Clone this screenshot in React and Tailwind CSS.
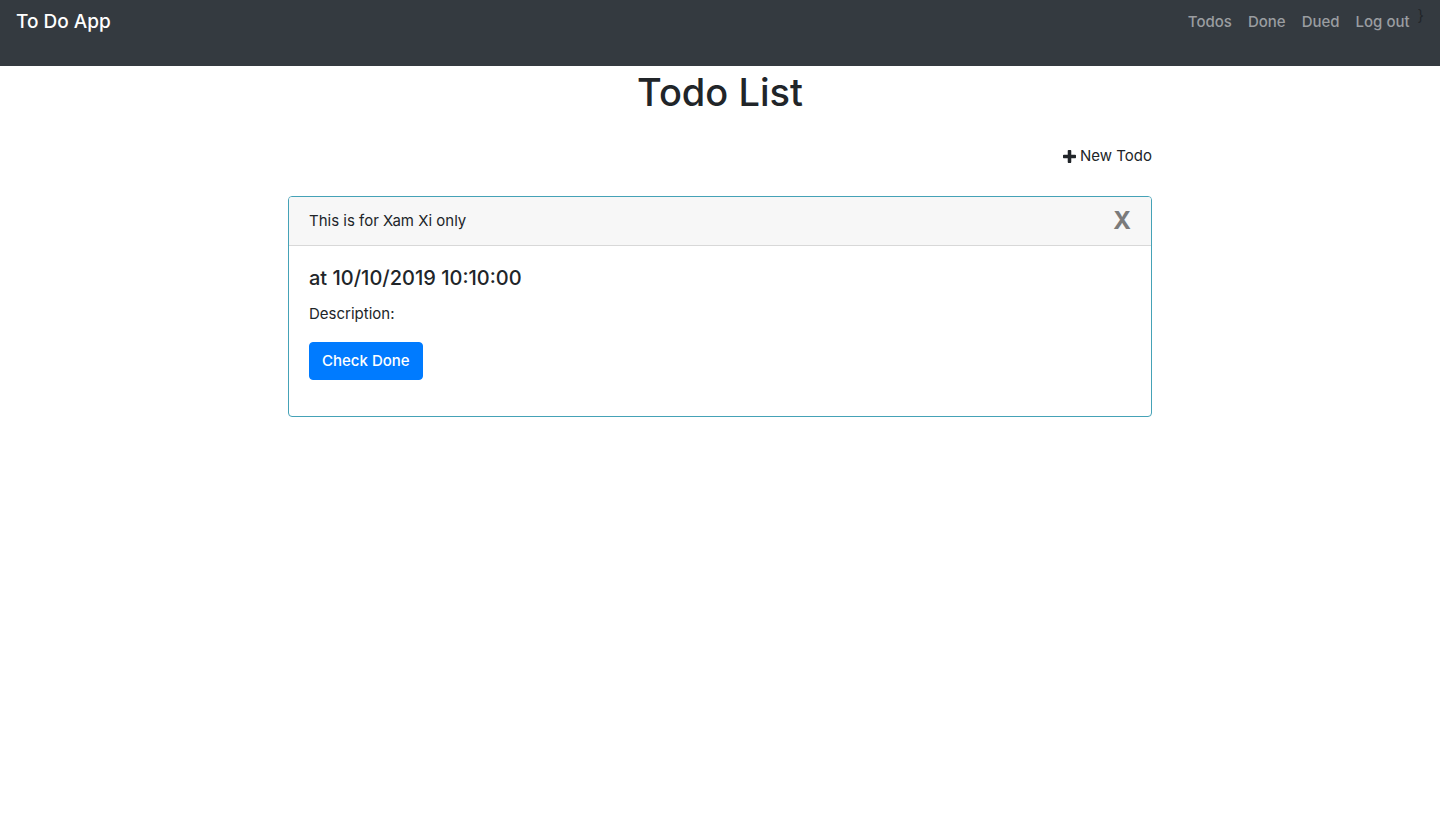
import React from "react";

const links = ["Todos", "Done", "Dued", "Log out"];

function PlusIcon() {
  return (
    <svg viewBox="192 128 1408 1408" className="size-[13px]" fill="currentColor" aria-hidden="true">
      <path d="M1600 736v192q0 40-28 68t-68 28h-416v416q0 40-28 68t-68 28h-192q-40 0-68-28t-28-68v-416h-416q-40 0-68-28t-28-68v-192q0-40 28-68t68-28h416v-416q0-40 28-68t68-28h192q40 0 68 28t28 68v416h416q40 0 68 28t28 68z" />
    </svg>
  );
}

export default function App() {
  return (
    <div className="font-['Inter',sans-serif] text-[15px] leading-6 text-[#212529]">
      <nav className="flex items-start justify-between bg-[#343a40] px-4 pt-2 pb-4">
        <a href="#" className="text-[19px] leading-7 font-medium text-white">To Do App</a>
        <div className="flex items-start">
          <ul className="flex pb-3.5 font-medium text-[#9a9da0]">
            {links.map((l) => (
              <li key={l}><a href="#" className="block px-2 py-0.5">{l}</a></li>
            ))}
          </ul>
          <span className="leading-4">{"}"}</span>
        </div>
      </nav>
      <main className="mx-auto w-3/5">
        <h1 className="pt-0.5 text-center text-[38px] leading-12 font-medium">Todo List</h1>
        <div className="mt-7 flex justify-end">
          <a href="#" className="flex items-center gap-1"><PlusIcon />New Todo</a>
        </div>
        <section className="mt-7 overflow-hidden rounded border border-[#45a2b7]">
          <header className="flex items-center justify-between border-b border-[#d8d8d8] bg-[#f7f7f7] px-5 py-3">
            <span>This is for Xam Xi only</span>
            <button type="button" aria-label="Delete X" className="text-2xl leading-6 font-bold text-[#7b7b7b]">X</button>
          </header>
          <div className="p-5 pb-9">
            <h2 className="mb-3 text-xl leading-6 font-medium">at 10/10/2019 10:10:00</h2>
            <p className="mb-4">Description:</p>
            <button type="button" className="rounded border border-[#007bff] bg-[#007bff] px-3 py-1.5 font-medium text-white">Check Done</button>
          </div>
        </section>
      </main>
    </div>
  );
}
